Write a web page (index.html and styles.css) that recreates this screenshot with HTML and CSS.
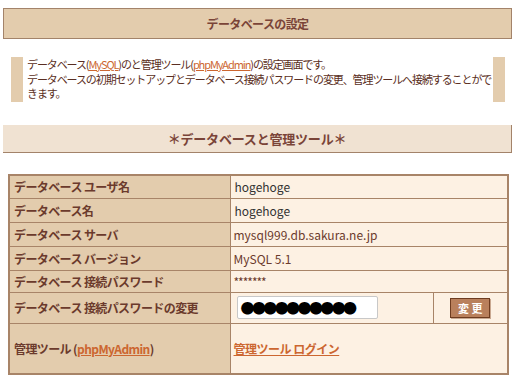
FILE: index.html
```html
<!DOCTYPE html>
<html lang="ja">
<head>
<meta charset="utf-8">
<link rel="stylesheet" href="styles.css">
</head>
<body>
<div class="page-title">データベースの設定</div>
<div class="notice">
  <p>データベース(<a href="#">MySQL</a>)のと管理ツール(<a href="#">phpMyAdmin</a>)の設定画面です。<br>データベースの初期セットアップとデータベース接続パスワードの変更、管理ツールへ接続することができます。</p>
</div>
<div class="section-title">＊データベースと管理ツール＊</div>
<table class="db">
  <colgroup><col class="c1"><col class="c2"><col class="c3"></colgroup>
  <tr class="r1"><th>データベース ユーザ名</th><td colspan="2" class="mono">hogehoge</td></tr>
  <tr class="r2"><th>データベース名</th><td colspan="2" class="mono">hogehoge</td></tr>
  <tr class="r3"><th>データベース サーバ</th><td colspan="2">mysql999.db.sakura.ne.jp</td></tr>
  <tr class="r4"><th>データベース バージョン</th><td colspan="2">MySQL 5.1</td></tr>
  <tr class="r5"><th>データベース 接続パスワード</th><td colspan="2" class="stars">*******</td></tr>
  <tr class="r6"><th>データベース 接続パスワードの変更</th><td class="pw"><span class="input">●●●●●●●●●●</span></td><td class="btn-cell"><span class="btn">変 更</span></td></tr>
  <tr class="r7"><th>管理ツール (<a href="#">phpMyAdmin</a>)</th><td colspan="2"><a href="#" class="login">管理ツール ログイン</a></td></tr>
</table>
</body>
</html>
```
FILE: styles.css
```css
html, body { margin: 0; padding: 0; background: #fff; }
body {
  font-family: "Noto Sans CJK JP", "DejaVu Sans", sans-serif;
  font-size: 12px;
  color: #5a2e22;
}
a { color: #cc6630; text-decoration: underline; }
.page-title {
  margin: 8px 3px 0 3px;
  height: 29px;
  line-height: 29px;
  background: #e3ccad;
  border: 1px solid #a3836a;
  text-align: center;
  font-weight: bold;
  color: #7a4438;
  letter-spacing: -0.6px;
}
.notice {
  margin: 18px 10px 0 11px;
  border-left: 12px solid #e3ccad;
  border-right: 12px solid #e3ccad;
  height: 45px;
}
.notice p {
  margin: 0;
  padding: 0 0 0 4px;
  font-size: 11px;
  line-height: 14.5px;
  letter-spacing: -1.1px;
}
.section-title {
  margin: 23px 3px 0 3px;
  height: 27px;
  line-height: 27px;
  background: #f0e2d2;
  border-bottom: 1px solid #a3836a;
  border-right: 1px solid #a3836a;
  text-align: center;
  font-weight: bold;
  font-size: 13px;
  letter-spacing: -0.2px;
  color: #7a4438;
}
.db {
  margin: 21px 0 0 8px;
  width: 499px;
  table-layout: fixed;
  border-collapse: collapse;
  border: 2px solid #a88468;
}
.c1 { width: 221px; }
.c2 { width: 203px; }
.c3 { width: 75px; }
.db th, .db td {
  border: 1px solid #a88468;
  padding: 0 0 0 4px;
  text-align: left;
  vertical-align: middle;
  white-space: nowrap;
  overflow: hidden;
}
.db th {
  background: #e3ccad;
  font-weight: bold;
  color: #6b3a2c;
  letter-spacing: -0.6px;
}
.db td { background: #fdf1e3; color: #6b3a2c; padding-left: 3px; }
.db td.mono { color: #333; padding-left: 4px; }
.db td.stars { font-size: 12px; letter-spacing: -1px; }
.r1 { height: 23px; }
.r2, .r3, .r4 { height: 24px; }
.r5 { height: 22px; }
.r6 { height: 31px; }
.r7 { height: 51px; }
.db td.pw { padding-left: 6px; }
.input {
  display: inline-block;
  width: 136px;
  height: 21px;
  line-height: 21px;
  border: 1px solid #c8c8c8;
  border-radius: 2px;
  background: #fff;
  color: #000;
  font-size: 14px;
  letter-spacing: -2.6px;
  padding-left: 3px;
  box-sizing: content-box;
  vertical-align: middle;
}
.db td.btn-cell { text-align: center; padding: 0; }
.btn {
  display: inline-block;
  width: 38px;
  height: 18px;
  line-height: 18px;
  background: #b9805c;
  border: 1px solid #6e3c20;
  box-shadow: 1px 1px 0 #c9a890;
  color: #fff;
  font-weight: bold;
  font-size: 11px;
  text-align: center;
  vertical-align: middle;
}
.login { font-weight: bold; letter-spacing: -0.5px; }
.db th a { font-weight: bold; }
```
